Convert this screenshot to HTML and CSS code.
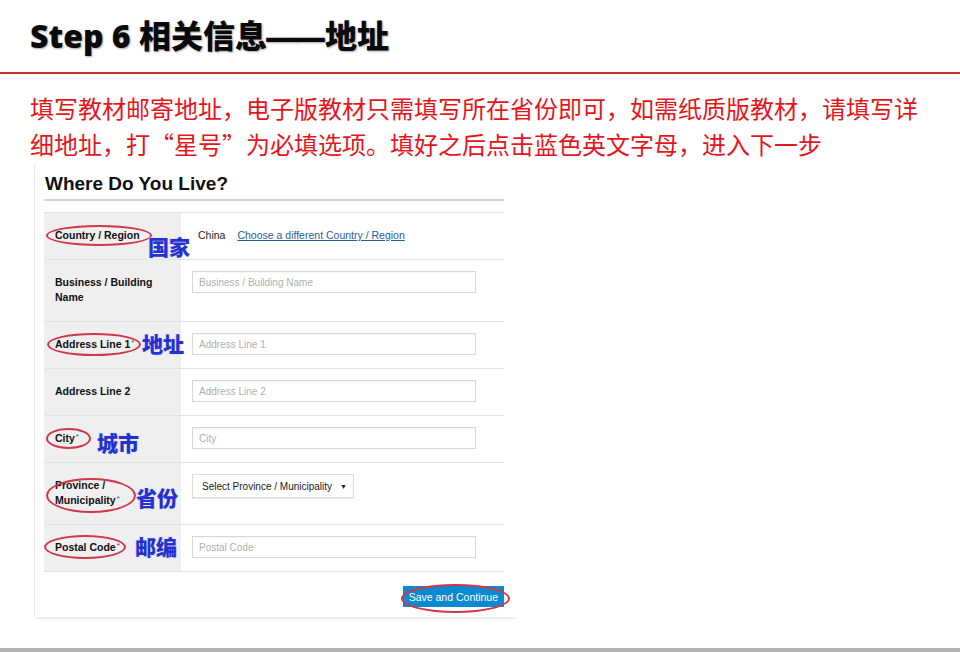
FILE: index.html
```html
<!DOCTYPE html>
<html lang="zh-CN">
<head>
    <meta charset="UTF-8">
    <title>Step 6 相关信息——地址</title>
    <link rel="stylesheet" href="styles.css">
</head>
<body>
    <div class="slide">
        <h1 class="slide-title">Step 6 相关信息<span class="dash">——</span>地址</h1>

        <p class="intro">填写教材邮寄地址，电子版教材只需填写所在省份即可，如需纸质版教材，请填写详细地址，打“星号”为必填选项。填好之后点击蓝色英文字母，进入下一步</p>

        <!-- Captura del formulario -->
        <div class="shot">
            <h2>Where Do You Live?</h2>
            <table class="address-form">
                <tr>
                    <th><span class="mark">Country / Region</span><span class="note note-country">国家</span></th>
                    <td class="country-cell"><span class="country">China</span><a href="#">Choose a different Country / Region</a></td>
                </tr>
                <tr>
                    <th>Business / Building Name</th>
                    <td><input type="text" placeholder="Business / Building Name"></td>
                </tr>
                <tr>
                    <th><span class="mark mark-addr">Address Line 1<sup class="req">*</sup></span><span class="note note-addr">地址</span></th>
                    <td><input type="text" placeholder="Address Line 1"></td>
                </tr>
                <tr>
                    <th>Address Line 2</th>
                    <td><input type="text" placeholder="Address Line 2"></td>
                </tr>
                <tr>
                    <th><span class="mark">City<sup class="req">*</sup></span><span class="note note-city">城市</span></th>
                    <td><input type="text" placeholder="City"></td>
                </tr>
                <tr>
                    <th><span class="mark mark-tall">Province /<br>Municipality<sup class="req">*</sup></span><span class="note note-province">省份</span></th>
                    <td>
                        <div class="select"><span>Select Province / Municipality</span><span class="caret">&#9660;</span></div>
                    </td>
                </tr>
                <tr>
                    <th><span class="mark mark-postal">Postal Code<sup class="req">*</sup></span><span class="note note-postal">邮编</span></th>
                    <td><input type="text" placeholder="Postal Code"></td>
                </tr>
            </table>
            <div class="actions">
                <button type="button" class="save">Save and Continue</button>
            </div>
        </div>

        <div class="footer-bar"></div>
    </div>
</body>
</html>
```

FILE: styles.css
```css
body {
    margin: 0;
    background-color: #fff;
    font-family: "Liberation Sans", Arial, sans-serif;
}

.slide {
    height: 652px;
    display: flex;
    flex-direction: column;
    overflow: hidden;
}

.slide-title {
    box-sizing: border-box;
    height: 74px;
    margin: 0;
    padding: 14px 30px;
    line-height: 44px;
    font-family: "Open Sans", "Noto Sans CJK SC", sans-serif;
    font-size: 32px;
    font-weight: 800;
    color: #0a0a0a;
    text-shadow: 1px 1px 2px rgba(0, 0, 0, 0.35);
    border-bottom: 2px solid #cc2b2b;
    white-space: nowrap;
}

.slide-title .dash {
    margin: 0 2px 0 -2px;
    letter-spacing: -3px;
}

.intro {
    margin: 16px 0 0 30px;
    width: 900px;
    font-family: "Noto Sans CJK SC", sans-serif;
    font-size: 24px;
    line-height: 36px;
    color: #e8141b;
}

/* Captura */
.shot {
    box-sizing: border-box;
    width: 483px;
    height: 452px;
    margin: 3px 0 0 34px;
    padding: 0 13px 0 9px;
    border-left: 1px solid #e6e6e6;
    box-shadow: 0 3px 3px -2px rgba(0, 0, 0, 0.15);
}

.shot h2 {
    margin: 8px 0 11px;
    padding: 0 0 4px 1px;
    font-size: 19px;
    line-height: 22px;
    color: #111;
    border-bottom: 2px solid #d5d5d5;
}

.address-form {
    width: 460px;
    border-collapse: collapse;
    border-top: 1px solid #e4e4e4;
}

.address-form tr {
    border-bottom: 1px solid #e4e4e4;
}

.address-form th {
    position: relative;
    width: 116px;
    padding: 15px 10px 16px 11px;
    background-color: #efefef;
    text-align: left;
    vertical-align: top;
    font-size: 10.5px;
    line-height: 15px;
    color: #111;
}

.address-form td {
    padding: 11px 10px 12px 11px;
    vertical-align: top;
    font-size: 10.5px;
    line-height: 15px;
    color: #222;
}

.address-form td.country-cell {
    padding: 15px 10px 16px 17px;
}

.country-cell a {
    margin-left: 12px;
    color: #285c9c;
}

.address-form input {
    box-sizing: border-box;
    width: 284px;
    height: 22px;
    padding: 0 6px;
    border: 1px solid #d8d8d8;
    box-shadow: inset 0 1px 1px rgba(0, 0, 0, 0.04);
    font-family: "Liberation Sans", Arial, sans-serif;
    font-size: 10px;
    color: #222;
}

.address-form input::placeholder {
    color: #b0b0b0;
}

.req {
    margin-left: 1px;
    font-size: 8px;
    line-height: 0;
    vertical-align: 3px;
    font-weight: normal;
    color: #555;
}

.select {
    box-sizing: border-box;
    display: flex;
    align-items: center;
    justify-content: space-between;
    width: 162px;
    height: 24px;
    padding: 0 6px 0 9px;
    border: 1px solid #ddd;
    box-shadow: 0 1px 1px rgba(0, 0, 0, 0.08);
    font-size: 10px;
    color: #222;
}

.select .caret {
    font-size: 7px;
}

.actions {
    padding-top: 14px;
    text-align: right;
}

.save {
    position: relative;
    height: 21px;
    padding: 0 6px;
    border: none;
    background-color: #0b8ad1;
    color: #fff;
    font-family: "Liberation Sans", Arial, sans-serif;
    font-size: 10.5px;
}

/* Anotaciones en rojo y azul */
.mark {
    position: relative;
    display: inline-block;
}

.mark::after,
.save::after {
    content: "";
    position: absolute;
    top: -3px;
    bottom: -3px;
    left: -9px;
    right: -12px;
    border: 2px solid #d0374a;
    border-radius: 50%;
}

.mark-addr::after {
    left: -8px;
    right: -7px;
    top: -4px;
    bottom: -4px;
}

.mark-tall::after {
    top: 0;
    bottom: -5px;
    right: -16px;
}

.mark-postal::after {
    left: -11px;
    right: -6px;
    top: -5px;
    bottom: -4px;
}

.save::after {
    top: -2px;
    bottom: -6px;
    left: -2px;
    right: -6px;
}

.note {
    position: absolute;
    z-index: 2;
    font-family: "Noto Sans CJK SC", sans-serif;
    font-size: 21px;
    font-weight: 900;
    line-height: 21px;
    color: #2430d0;
    white-space: nowrap;
    text-shadow: 0 0 1px #fff, 0 0 2px #fff, 0 0 1px #2430d0;
}

.note-country { left: 104px; top: 23px; }
.note-addr { left: 98px; top: 11px; }
.note-city { left: 53px; top: 16px; }
.note-province { left: 92px; top: 24px; }
.note-postal { left: 91px; top: 11px; }

.footer-bar {
    margin-top: auto;
    height: 4px;
    background-color: #b3b3b3;
}
```
